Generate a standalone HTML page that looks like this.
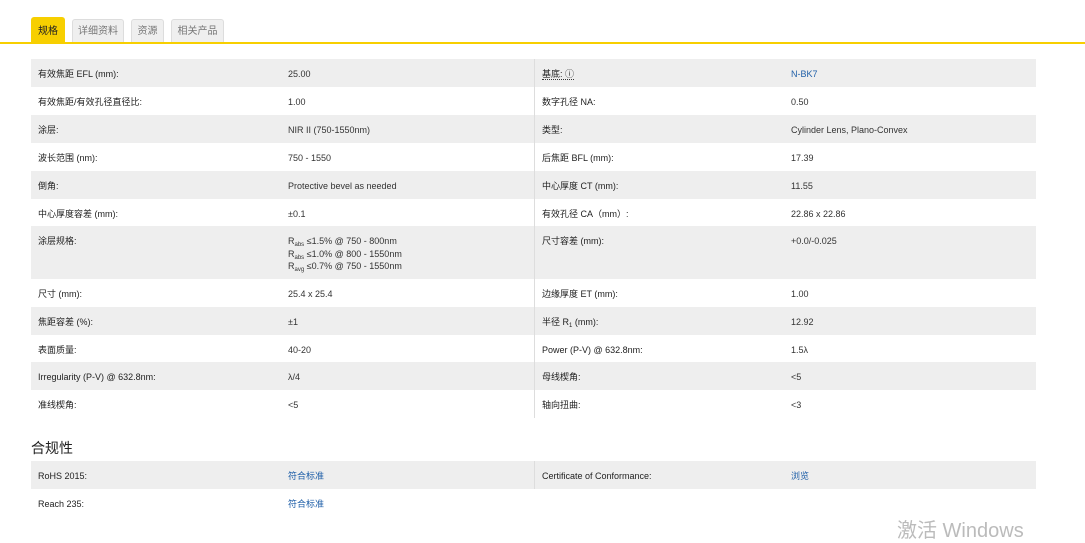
<!DOCTYPE html>
<html><head><meta charset="utf-8"><style>
*{margin:0;padding:0;box-sizing:border-box}
body{width:1085px;height:536px;overflow:hidden;background:#fff;font-family:"Liberation Sans","Noto Sans CJK SC",sans-serif;color:#333;position:relative}
.tab{position:absolute;height:24px;font-size:10px;line-height:24px;text-align:center;background:#efefef;border:1px solid #ddd;border-bottom:none;border-radius:3px 3px 0 0;color:#777}
.tab.a{background:#f7cf00;border-color:#f7cf00;color:#222;height:26px;line-height:27px}
.line{position:absolute;left:0;top:42px;width:1085px;height:2px;background:#f7cf00}
.row{position:absolute;left:31px;width:1005px;font-size:9px}
.row.g{background:#eeeeee}
.row span{position:absolute;top:10px;line-height:10px}
.l1{left:7px;color:#222}.v1{left:257px}.l2{left:511px;color:#222}.v2{left:760px}
.div{position:absolute;left:534px;width:1px;background:#ddd}
a{color:#1f5fa8;text-decoration:none}
sub{font-size:6px;vertical-align:-2px;line-height:0}
</style></head><body>
<div class="tab a" style="left:31px;top:17px;width:34px">规格</div>
<div class="tab" style="left:72px;top:19px;width:52px">详细资料</div>
<div class="tab" style="left:131px;top:19px;width:33px">资源</div>
<div class="tab" style="left:171px;top:19px;width:53px">相关产品</div>
<div class="line"></div>

<div class="row g" style="top:59px;height:28px"><span class="l1">有效焦距 EFL (mm):</span><span class="v1">25.00</span><span class="l2" style="border-bottom:1px dotted #333">基底: ⓘ</span><span class="v2"><a>N-BK7</a></span></div>
<div class="row" style="top:87px;height:28px"><span class="l1">有效焦距/有效孔径直径比:</span><span class="v1">1.00</span><span class="l2">数字孔径 NA:</span><span class="v2">0.50</span></div>
<div class="row g" style="top:115px;height:28px"><span class="l1">涂层:</span><span class="v1">NIR II (750-1550nm)</span><span class="l2">类型:</span><span class="v2">Cylinder Lens, Plano-Convex</span></div>
<div class="row" style="top:143px;height:28px"><span class="l1">波长范围 (nm):</span><span class="v1">750 - 1550</span><span class="l2">后焦距 BFL (mm):</span><span class="v2">17.39</span></div>
<div class="row g" style="top:171px;height:28px"><span class="l1">倒角:</span><span class="v1">Protective bevel as needed</span><span class="l2">中心厚度 CT (mm):</span><span class="v2">11.55</span></div>
<div class="row" style="top:199px;height:27px"><span class="l1">中心厚度容差 (mm):</span><span class="v1">±0.1</span><span class="l2">有效孔径 CA（mm）:</span><span class="v2">22.86 x 22.86</span></div>
<div class="row g" style="top:226px;height:53px"><span class="l1">涂层规格:</span><span class="v1" style="line-height:12.5px;top:9px">R<sub>abs</sub> ≤1.5% @ 750 - 800nm<br>R<sub>abs</sub> ≤1.0% @ 800 - 1550nm<br>R<sub>avg</sub> ≤0.7% @ 750 - 1550nm</span><span class="l2">尺寸容差 (mm):</span><span class="v2">+0.0/-0.025</span></div>
<div class="row" style="top:279px;height:28px"><span class="l1">尺寸 (mm):</span><span class="v1">25.4 x 25.4</span><span class="l2">边缘厚度 ET (mm):</span><span class="v2">1.00</span></div>
<div class="row g" style="top:307px;height:28px"><span class="l1">焦距容差 (%):</span><span class="v1">±1</span><span class="l2">半径 R<sub>1</sub> (mm):</span><span class="v2">12.92</span></div>
<div class="row" style="top:335px;height:27px"><span class="l1">表面质量:</span><span class="v1">40-20</span><span class="l2">Power (P-V) @ 632.8nm:</span><span class="v2">1.5λ</span></div>
<div class="row g" style="top:362px;height:28px"><span class="l1">Irregularity (P-V) @ 632.8nm:</span><span class="v1">λ/4</span><span class="l2">母线楔角:</span><span class="v2">&lt;5</span></div>
<div class="row" style="top:390px;height:28px"><span class="l1">准线楔角:</span><span class="v1">&lt;5</span><span class="l2">轴向扭曲:</span><span class="v2">&lt;3</span></div>
<div class="div" style="top:59px;height:359px"></div>

<div style="position:absolute;left:31px;top:438px;font-size:14px;color:#222">合规性</div>
<div class="row g" style="top:461px;height:28px"><span class="l1">RoHS 2015:</span><span class="v1"><a>符合标准</a></span><span class="l2">Certificate of Conformance:</span><span class="v2"><a>浏览</a></span></div>
<div class="row" style="top:489px;height:28px"><span class="l1">Reach 235:</span><span class="v1"><a>符合标准</a></span></div>
<div class="div" style="top:461px;height:28px"></div>

<div style="position:absolute;left:897px;top:519px;font-size:20px;color:#bbb;line-height:24px">激活 Windows</div>
</body></html>
